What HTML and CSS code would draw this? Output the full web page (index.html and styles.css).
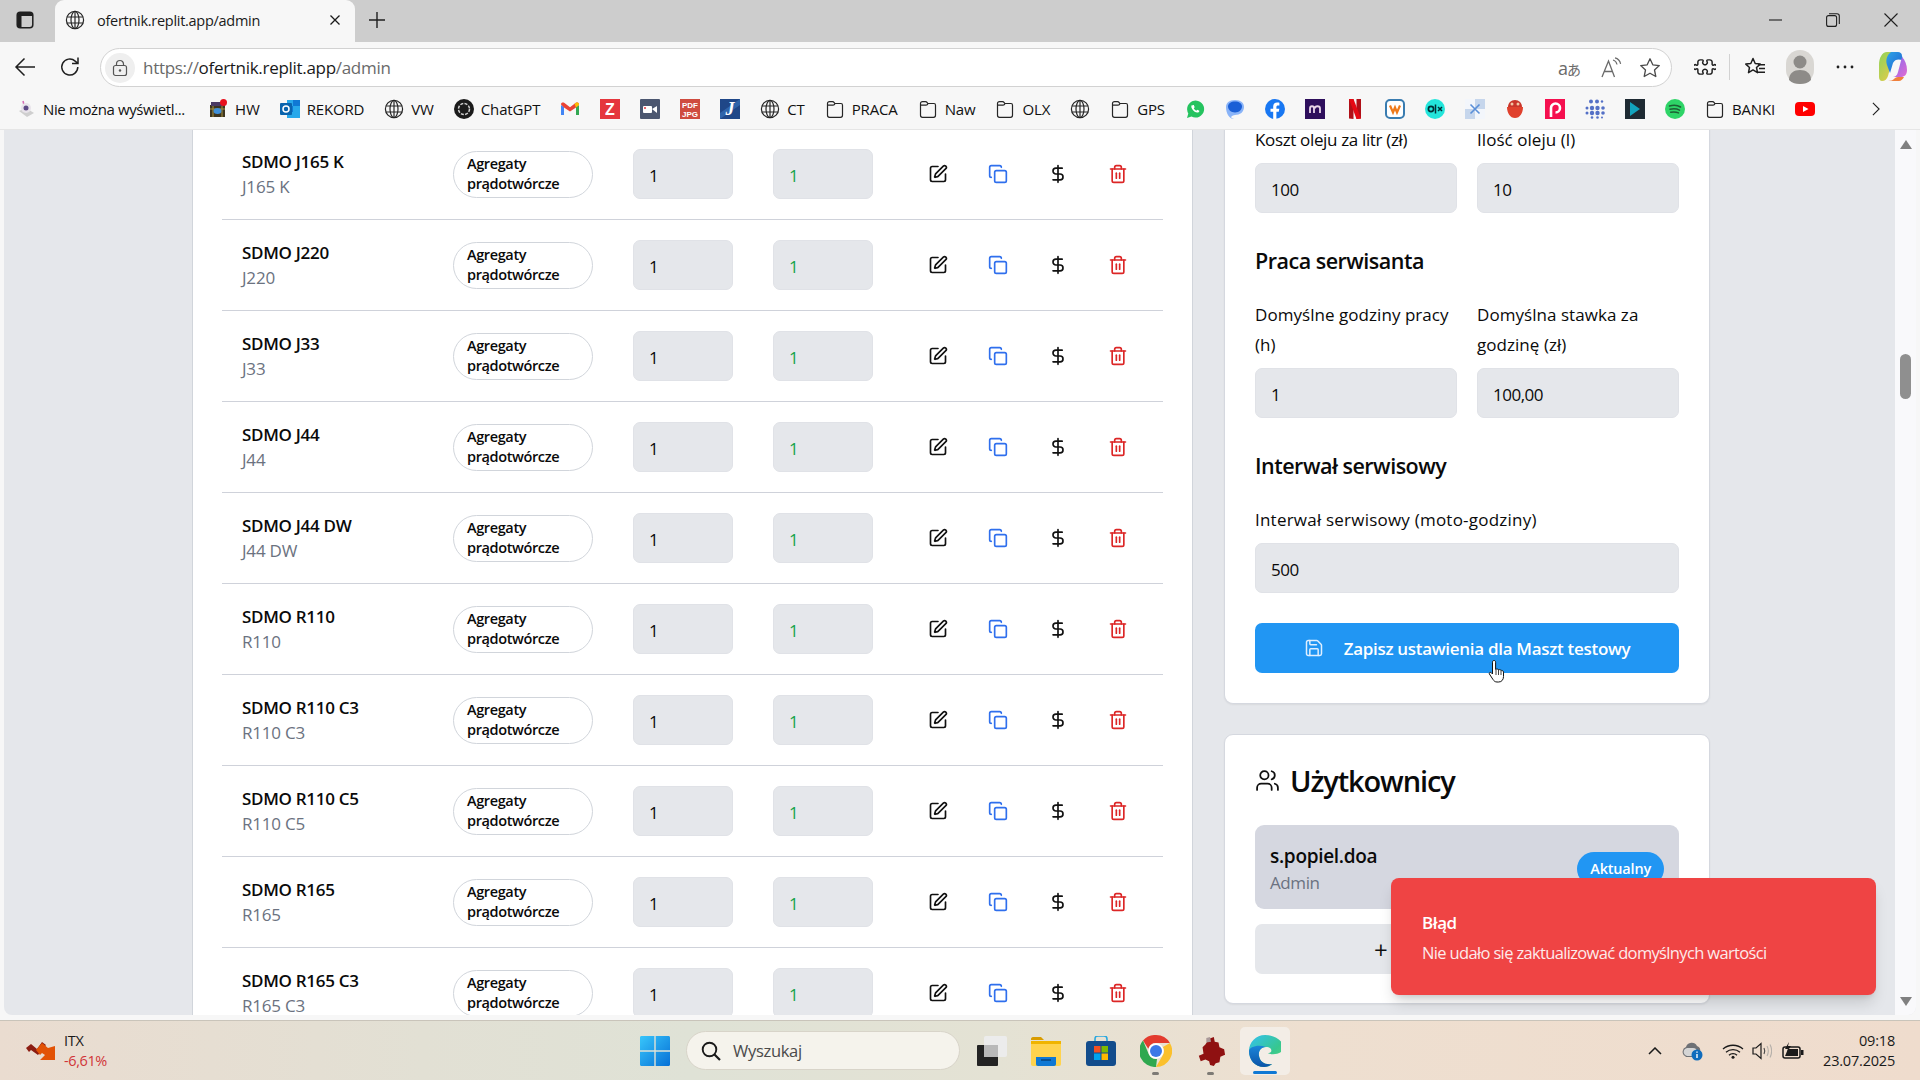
FILE: index.html
```html
<!DOCTYPE html>
<html lang="pl">
<head>
<meta charset="utf-8">
<title>ofertnik.replit.app/admin</title>
<link rel="stylesheet" href="styles.css">
</head>
<body>
<svg class="sprite" aria-hidden="true">
  <symbol id="i-edit" viewBox="0 0 24 24"><path d="M12 3H5a2 2 0 0 0-2 2v14a2 2 0 0 0 2 2h14a2 2 0 0 0 2-2v-7"/><path d="M18.375 2.625a1 1 0 0 1 3 3l-9.013 9.014a2 2 0 0 1-.853.505l-2.873.84a.5.5 0 0 1-.62-.62l.84-2.873a2 2 0 0 1 .506-.852z"/></symbol>
  <symbol id="i-copy" viewBox="0 0 24 24"><rect width="14" height="14" x="8" y="8" rx="2" ry="2"/><path d="M4 16c-1.100 0-2-.9-2-2V4c0-1.100.9-2 2-2h10c1.100 0 2 .9 2 2"/></symbol>
  <symbol id="i-dollar" viewBox="0 0 24 24"><line x1="12" x2="12" y1="2" y2="22"/><path d="M17 5H9.500a3.500 3.500 0 0 0 0 7h5a3.500 3.500 0 0 1 0 7H6"/></symbol>
  <symbol id="i-trash" viewBox="0 0 24 24"><path d="M3 6h18"/><path d="M19 6v14c0 1-1 2-2 2H7c-1 0-2-1-2-2V6"/><path d="M8 6V4c0-1 1-2 2-2h4c1 0 2 1 2 2v2"/><line x1="10" x2="10" y1="11" y2="17"/><line x1="14" x2="14" y1="11" y2="17"/></symbol>
  <symbol id="i-globe" viewBox="0 0 20 20"><circle cx="10" cy="10" r="8.600"/><ellipse cx="10" cy="10" rx="4" ry="8.600"/><path d="M1.800 7h16.400M1.800 13h16.400M10 1.400v17.200"/></symbol>
  <symbol id="i-folder" viewBox="0 0 20 20"><path d="M2.500 4.600c0-1.200.8-2 2-2h3c.8 0 1.200.3 1.700 1l.6.9h6.200c1.200 0 1.500.8 1.500 1.800v10c0 1.200-.8 2-2 2h-11c-1.200 0-2-.8-2-2zM2.500 6.200h5.600c.9 0 1.400-.4 2-1.800"/></symbol>
</svg>

<header class="tabstrip">
  <div class="panel-btn"><svg class="ico18" viewBox="0 0 18 18"><rect x="1.200" y="1.200" width="15.600" height="15.600" rx="3" fill="none" stroke="#1f1f1f" stroke-width="1.500"/><path d="M1.500 4c0-1.500 1-2.500 2.500-2.500h10c1.500 0 2.500 1 2.500 2.500v1h-15zM1.500 5h4v11h-4z" fill="#1f1f1f"/></svg></div>
  <div class="tab">
    <svg class="ico20 line"><use href="#i-globe"/></svg>
    <span class="tab-title">ofertnik.replit.app/admin</span>
    <svg class="tab-close" viewBox="0 0 12 12"><path d="M1.500 1.500l9 9M10.500 1.500l-9 9"/></svg>
  </div>
  <div class="new-tab"><svg class="ico18" viewBox="0 0 18 18"><path d="M9 1v16M1 9h16" stroke="#1f1f1f" stroke-width="1.400" fill="none"/></svg></div>
  <div class="spacer"></div>
  <div class="win-btn"><svg class="ico14" viewBox="0 0 14 14"><path d="M1 7h13" stroke="#1f1f1f" stroke-width="1.100"/></svg></div>
  <div class="win-btn"><svg class="ico14" viewBox="0 0 14 14"><rect x=".6" y="2.600" width="10" height="10.800" rx="2" fill="none" stroke="#1f1f1f" stroke-width="1.100"/><path d="M3 .7h8c1.400 0 2.300.9 2.300 2.300v8" fill="none" stroke="#1f1f1f" stroke-width="1.100"/></svg></div>
  <div class="win-btn"><svg class="ico14" viewBox="0 0 14 14"><path d="M.5.500l13 13M13.500.500l-13 13" stroke="#1f1f1f" stroke-width="1.100"/></svg></div>
</header>

<nav class="toolbar">
  <div class="tool-btn first"><svg class="ico22" viewBox="0 0 22 22"><path d="M21 11H2M10.500 2.500L2 11l8.500 8.500" fill="none" stroke="#1f1f1f" stroke-width="1.500"/></svg></div>
  <div class="tool-btn"><svg class="ico22" viewBox="0 0 22 22"><path d="M18.800 11a8 8 0 1 1-2.600-5.900L19 7.500M19 1.500v6h-6" fill="none" stroke="#1f1f1f" stroke-width="1.500"/></svg></div>
  <div class="address">
    <div class="lock"><svg class="ico18" viewBox="0 0 18 18"><rect x="2.500" y="6.500" width="13" height="10" rx="2" fill="none" stroke="#555" stroke-width="1.200"/><path d="M5.500 6.500V5a3.500 3.500 0 0 1 7 0v1.500" fill="none" stroke="#555" stroke-width="1.200"/><circle cx="9" cy="11.500" r="1.200" fill="#555"/></svg></div>
    <div class="url"><span class="url-dim">https://</span>ofertnik.replit.app<span class="url-dim">/admin</span></div>
    <div class="addr-icons">
      <span class="translate">a<span class="kana">あ</span></span>
      <svg class="ico22" viewBox="0 0 22 22"><path d="M2 20L8.500 4l6 16M4.500 14.500h8" fill="none" stroke="#6a6a6a" stroke-width="1.300"/><path d="M13 3c2 .5 3.500 2 4 4.500M15 .8c3 .7 5 3 5.600 6" fill="none" stroke="#6a6a6a" stroke-width="1.200"/></svg>
      <svg class="ico22" viewBox="0 0 22 22"><path d="M11 1.800l2.800 6 6.500.8-4.800 4.400 1.300 6.500-5.800-3.300-5.800 3.300 1.300-6.500L1.700 8.600l6.500-.8z" fill="none" stroke="#4a4a4a" stroke-width="1.300" stroke-linejoin="round"/></svg>
    </div>
  </div>
  <div class="tool-btn ext"><svg class="ico22" viewBox="0 0 24 24"><path transform="rotate(45 12 12)" d="M15.390 4.390a1 1 0 0 0 1.680-.474 2.500 2.500 0 1 1 3.014 3.015 1 1 0 0 0-.474 1.680l1.683 1.682a2.414 2.414 0 0 1 0 3.414L19.610 15.390a1 1 0 0 1-1.680-.474 2.500 2.500 0 1 0-3.014 3.015 1 1 0 0 1 .474 1.680l-1.683 1.682a2.414 2.414 0 0 1-3.414 0L8.610 19.610a1 1 0 0 0-1.680.474 2.500 2.500 0 1 1-3.014-3.015 1 1 0 0 0 .474-1.680l-1.683-1.682a2.414 2.414 0 0 1 0-3.414L4.390 8.610a1 1 0 0 1 1.680.474 2.500 2.500 0 1 0 3.014-3.015 1 1 0 0 1-.474-1.680l1.683-1.682a2.414 2.414 0 0 1 3.414 0z" fill="none" stroke="#1f1f1f" stroke-width="1.600"/></svg></div>
  <div class="tool-divider"></div>
  <div class="tool-btn"><svg class="ico22" viewBox="0 0 22 22"><path d="M9 2.500l2.200 5 5 .6-3.700 3.400 1 5.200L9 13.900l-4.500 2.800 1-5.200L1.800 8.100l5-.6z" fill="none" stroke="#1f1f1f" stroke-width="1.500" stroke-linejoin="round"/><path d="M14 8.800h7M15 12.500h6M13.500 16.200h7.500" stroke="#1f1f1f" stroke-width="1.400"/></svg></div>
  <div class="tool-btn"><svg class="avatar" viewBox="0 0 28 34"><rect width="28" height="34" rx="14" fill="#d9d7d3"/><circle cx="14" cy="12" r="6.500" fill="#8d8b88"/><path d="M3 30c0-7 5-10 11-10s11 3 11 10c-3 3-7 4-11 4s-8-1-11-4z" fill="#8d8b88"/></svg></div>
  <div class="tool-btn"><svg class="ico22" viewBox="0 0 22 22"><circle cx="4" cy="11" r="1.400" fill="#1f1f1f"/><circle cx="11" cy="11" r="1.400" fill="#1f1f1f"/><circle cx="18" cy="11" r="1.400" fill="#1f1f1f"/></svg></div>
  <div class="tool-btn copilot"><svg class="ico28" viewBox="0 0 28 32">
    <defs>
      <linearGradient id="cpA" x1="0" y1="0" x2="1" y2="1"><stop offset="0" stop-color="#2fa4e7"/><stop offset="1" stop-color="#1e5fd0"/></linearGradient>
      <linearGradient id="cpB" x1="0" y1="0" x2="1" y2="1"><stop offset="0" stop-color="#8fd35a"/><stop offset="1" stop-color="#f6c945"/></linearGradient>
      <linearGradient id="cpC" x1="0" y1="0" x2="1" y2="1"><stop offset="0" stop-color="#7c6cf0"/><stop offset="1" stop-color="#e46ad1"/></linearGradient>
    </defs>
    <path d="M8 1h11c-3 0-4 2-5 5l-5 19c-1 3-3 5-6 5-2 0-3-2-3-4V14C0 7 3 1 8 1z" fill="url(#cpB)"/>
    <path d="M8 1h11c2 0 4 1 4 4l1 4c-5-1-8-1-10 3L11 22 8 14C6 8 9 3 12 1z" fill="url(#cpA)"/>
    <path d="M23 6c3 3 5 8 5 13s-3 7-6 7H13c3 0 5-1 6-5l4-15z" fill="url(#cpC)"/>
    <path d="M9 30h11c2 0 4-2 5-4l-6 0c-2 0-3 1-4 2-1 1-3 2-6 2z" fill="#f0803c"/>
  </svg></div>
</nav>

<div class="bookmarks">
  <div class="bm bm-first"><svg class="bi" viewBox="0 0 20 20"><path d="M3 12l7-3 8 5-7 4z" fill="#cfcfcf"/><path d="M7 2l1 4" stroke="#d66bb5" stroke-width="1.500"/><circle cx="10" cy="9" r="5" fill="#e8e3ea"/><circle cx="10" cy="9" r="2.500" fill="#5e4a86"/></svg><span class="bl bl-long">Nie można wyświetl...</span></div>
  <div class="bm"><svg class="bi" viewBox="0 0 20 20"><rect x="2" y="6" width="15" height="12" fill="#3d3520"/><path d="M2 10h15M5 6v12M14 6v12" stroke="#a8923e"/><ellipse cx="9.500" cy="12" rx="4" ry="3" fill="#3f8fd8"/><path d="M3 3h12v4H3z" fill="#4a3a63"/><circle cx="15.500" cy="3.500" r="3.500" fill="#e8111d"/></svg><span class="bl">HW</span></div>
  <div class="bm"><svg class="bi" viewBox="0 0 20 20"><rect x="7" y="1" width="13" height="18" fill="#28a8ea"/><path d="M13 1h7v6h-7zM7 7h6v6H7z" fill="#0f78d4"/><rect y="4" width="12" height="12" rx="1" fill="#0a64ad"/><circle cx="6" cy="10" r="3" fill="none" stroke="#fff" stroke-width="1.500"/></svg><span class="bl">REKORD</span></div>
  <div class="bm"><svg class="bi line"><use href="#i-globe"/></svg><span class="bl">VW</span></div>
  <div class="bm"><svg class="bi" viewBox="0 0 20 20"><circle cx="10" cy="10" r="10" fill="#1b1b1b"/><circle cx="10" cy="10" r="5.500" fill="none" stroke="#cfcfcf" stroke-width="1.500" stroke-dasharray="3 1.300"/></svg><span class="bl">ChatGPT</span></div>
  <div class="bm"><svg class="bi" viewBox="0 0 20 20"><path d="M1 6v10h3V8z" fill="#4285f4"/><path d="M19 6v10h-3V8z" fill="#34a853"/><path d="M1 5.500C1 3.500 3 3 4.500 4L10 8.200 15.500 4C17 3 19 3.500 19 5.500L16 8.500 10 12.500 4 8.500z" fill="#ea4335"/><path d="M16 8.500L19 6V5.500C19 3.500 17 3 15.500 4L14.500 4.800z" fill="#fbbc04"/></svg></div>
  <div class="bm"><svg class="bi" viewBox="0 0 20 20"><rect width="20" height="20" fill="#e5363d"/><text class="glyph-z" x="10" y="15.500">Z</text></svg></div>
  <div class="bm"><svg class="bi" viewBox="0 0 20 20"><rect width="20" height="20" rx="1" fill="#4c5770"/><rect x="3" y="7" width="9" height="7" rx="1" fill="#fff"/><path d="M12 10l5-3v7z" fill="#fff"/><circle cx="5" cy="9" r="1" fill="#e5363d"/></svg></div>
  <div class="bm"><svg class="bi" viewBox="0 0 20 20"><rect width="20" height="20" fill="#cf4b3f"/><text class="glyph-pdf" x="10" y="9">PDF</text><text class="glyph-pdf" x="10" y="18">JPG</text></svg></div>
  <div class="bm"><svg class="bi" viewBox="0 0 20 20"><path d="M0 0h20v20H0z" fill="#1f4788"/><path d="M20 0v6L0 20V14z" fill="#3a78c2" opacity=".6"/><text class="glyph-g" x="10" y="16">J</text></svg></div>
  <div class="bm"><svg class="bi line"><use href="#i-globe"/></svg><span class="bl">CT</span></div>
  <div class="bm"><svg class="bi line"><use href="#i-folder"/></svg><span class="bl">PRACA</span></div>
  <div class="bm"><svg class="bi line"><use href="#i-folder"/></svg><span class="bl">Naw</span></div>
  <div class="bm"><svg class="bi line"><use href="#i-folder"/></svg><span class="bl">OLX</span></div>
  <div class="bm"><svg class="bi line"><use href="#i-globe"/></svg></div>
  <div class="bm"><svg class="bi line"><use href="#i-folder"/></svg><span class="bl">GPS</span></div>
  <div class="bm"><svg class="bi" viewBox="0 0 20 20"><path d="M2 19l1.300-4.600A8.500 8.500 0 1 1 6.500 17.500z" fill="#25c35f"/><path d="M7 6c-1 1-1 2.500.500 4.500S11 14 13 13.500c1-.3 1.500-1 1.300-1.800l-2-1-1 1c-1-.4-2-1.500-2.500-2.500l.9-1-.9-2.200c-.7-.2-1.300 0-1.800.5z" fill="#fff"/></svg></div>
  <div class="bm"><svg class="bi" viewBox="0 0 20 20"><path d="M1 8c0-4 3-7 9-7s9 3 9 7c0 5-4 8-9 8l-2 .5C5 18 6 19 9 20 4 20 1 14 1 8z" fill="#8ab4f8"/><path d="M3 7.500c0-3 3-5 7-5s7 2 7 5-3 6-7 6-7-3-7-6z" fill="#1a5fd6"/></svg></div>
  <div class="bm"><svg class="bi" viewBox="0 0 20 20"><circle cx="10" cy="10" r="10" fill="#1877f2"/><path d="M13.800 12.800l.5-3h-2.900V8c0-.9.400-1.600 1.700-1.600h1.300V3.800s-1.200-.2-2.300-.2c-2.400 0-3.900 1.400-3.900 4v2.200H5.500v3h2.700V20h3.200v-7.200z" fill="#fff"/></svg></div>
  <div class="bm"><svg class="bi" viewBox="0 0 20 20"><rect width="20" height="20" fill="#2e0f5c"/><path d="M5 14V9.500c0-3 4-3 4 0V14M10 9.500c0-3 5-3 5 0V14" fill="none" stroke="#e8d5e8" stroke-width="1.800"/></svg></div>
  <div class="bm"><svg class="bi" viewBox="0 0 20 20"><path d="M4 0h4.500v20L4 19.500z" fill="#b01018"/><path d="M11.500 0H16v19.500l-4.500.5z" fill="#b01018"/><path d="M4 0h4.500l7.500 19.500-4.500.5z" fill="#e50914"/></svg></div>
  <div class="bm"><svg class="bi" viewBox="0 0 20 20"><rect x="1" y="1" width="18" height="18" rx="4" fill="#fff" stroke="#3a7cb0" stroke-width="2"/><path d="M5 6.500l3 7 2-5 2 5 3-7" fill="none" stroke="#ef7a1a" stroke-width="2.200"/></svg></div>
  <div class="bm"><svg class="bi" viewBox="0 0 20 20"><circle cx="10" cy="10" r="10" fill="#23e5db"/><circle cx="6" cy="10" r="2.600" fill="none" stroke="#002f34" stroke-width="1.700"/><path d="M10.500 5.500v9M13 8l4 4M17 8l-4 4" stroke="#002f34" stroke-width="1.500"/></svg></div>
  <div class="bm"><svg class="bi" viewBox="0 0 20 20"><rect width="20" height="20" fill="#fff"/><path d="M0 0h10v10H0zM10 10h10v10H10z" fill="#f3f6fb"/><path d="M0 10h10v10H0zM10 0h10v10H10z" fill="#c6d6ec"/><path d="M5.500 5.500l9 9M14.500 5.500l-9 9" stroke="#5a8fd8" stroke-width="1.600"/></svg></div>
  <div class="bm"><svg class="bi" viewBox="0 0 20 20"><path d="M2 8h16c0 6-3 11-8 11S2 14 2 8z" fill="#e0412d"/><path d="M3 8c0-4 3-7 7-7s7 3 7 7z" fill="#c9352a"/><circle cx="7" cy="5" r="1.500" fill="#f2c6a5"/><circle cx="13" cy="5" r="1.500" fill="#f2c6a5"/></svg></div>
  <div class="bm"><svg class="bi" viewBox="0 0 20 20"><rect width="20" height="20" fill="#f5104f"/><path d="M6 18V9a4.500 4.500 0 1 1 4.500 4.500" fill="none" stroke="#fff" stroke-width="2.600"/></svg></div>
  <div class="bm"><svg class="bi" viewBox="0 0 20 20"><g fill="#5470c6"><circle cx="6" cy="2.500" r="2"/><circle cx="12" cy="2.500" r="2"/><circle cx="17" cy="2.500" r="1.200"/><circle cx="2" cy="9" r="1.500"/><circle cx="7" cy="9" r="2.200"/><circle cx="12.500" cy="9" r="2.200"/><circle cx="18" cy="9" r="1.800"/><circle cx="2" cy="14" r="1.500"/><circle cx="7" cy="14" r="2.200"/><circle cx="12.500" cy="14" r="2.200"/><circle cx="18" cy="14" r="1.800"/><circle cx="7" cy="18.500" r="1.300"/><circle cx="12.500" cy="18.500" r="1.300"/><circle cx="17" cy="18.500" r="1"/></g></svg></div>
  <div class="bm"><svg class="bi" viewBox="0 0 20 20"><rect width="20" height="20" fill="#1e2a33"/><path d="M5 3l10 7-10 7z" fill="#12a3bd"/></svg></div>
  <div class="bm"><svg class="bi" viewBox="0 0 20 20"><circle cx="10" cy="10" r="10" fill="#2ed467"/><path d="M4.500 7c4-1 8-.8 11 1M5 10.200c3.500-.8 6.800-.6 9.500.9M5.700 13.200c3-.6 5.500-.4 7.800.7" fill="none" stroke="#111" stroke-opacity=".6" stroke-width="1.500" stroke-linecap="round"/></svg></div>
  <div class="bm"><svg class="bi line"><use href="#i-folder"/></svg><span class="bl">BANKI</span></div>
  <div class="bm"><svg class="bi" viewBox="0 0 20 20"><rect y="3" width="20" height="14" rx="4" fill="#f00"/><path d="M8 7l5.500 3L8 13z" fill="#fff"/></svg></div>
  <div class="bm-more"><svg class="ico14" viewBox="0 0 14 18"><path d="M3 1l8 8-8 8" fill="none" stroke="#1f1f1f" stroke-width="1.400"/></svg></div>
</div>

<div class="frame">
  <main class="page">
    <div class="viewport">
      <section class="list-card">
        <div class="row">
          <div class="model"><div class="model-name">SDMO J165 K</div><div class="model-code">J165 K</div></div>
          <div class="pill">Agregaty prądotwórcze</div>
          <input class="field" value="1" readonly>
          <input class="field field-green" value="1" readonly>
          <svg class="act"><use href="#i-edit"/></svg><svg class="act act-blue"><use href="#i-copy"/></svg><svg class="act"><use href="#i-dollar"/></svg><svg class="act act-red"><use href="#i-trash"/></svg>
        </div>
        <div class="row">
          <div class="model"><div class="model-name">SDMO J220</div><div class="model-code">J220</div></div>
          <div class="pill">Agregaty prądotwórcze</div>
          <input class="field" value="1" readonly>
          <input class="field field-green" value="1" readonly>
          <svg class="act"><use href="#i-edit"/></svg><svg class="act act-blue"><use href="#i-copy"/></svg><svg class="act"><use href="#i-dollar"/></svg><svg class="act act-red"><use href="#i-trash"/></svg>
        </div>
        <div class="row">
          <div class="model"><div class="model-name">SDMO J33</div><div class="model-code">J33</div></div>
          <div class="pill">Agregaty prądotwórcze</div>
          <input class="field" value="1" readonly>
          <input class="field field-green" value="1" readonly>
          <svg class="act"><use href="#i-edit"/></svg><svg class="act act-blue"><use href="#i-copy"/></svg><svg class="act"><use href="#i-dollar"/></svg><svg class="act act-red"><use href="#i-trash"/></svg>
        </div>
        <div class="row">
          <div class="model"><div class="model-name">SDMO J44</div><div class="model-code">J44</div></div>
          <div class="pill">Agregaty prądotwórcze</div>
          <input class="field" value="1" readonly>
          <input class="field field-green" value="1" readonly>
          <svg class="act"><use href="#i-edit"/></svg><svg class="act act-blue"><use href="#i-copy"/></svg><svg class="act"><use href="#i-dollar"/></svg><svg class="act act-red"><use href="#i-trash"/></svg>
        </div>
        <div class="row">
          <div class="model"><div class="model-name">SDMO J44 DW</div><div class="model-code">J44 DW</div></div>
          <div class="pill">Agregaty prądotwórcze</div>
          <input class="field" value="1" readonly>
          <input class="field field-green" value="1" readonly>
          <svg class="act"><use href="#i-edit"/></svg><svg class="act act-blue"><use href="#i-copy"/></svg><svg class="act"><use href="#i-dollar"/></svg><svg class="act act-red"><use href="#i-trash"/></svg>
        </div>
        <div class="row">
          <div class="model"><div class="model-name">SDMO R110</div><div class="model-code">R110</div></div>
          <div class="pill">Agregaty prądotwórcze</div>
          <input class="field" value="1" readonly>
          <input class="field field-green" value="1" readonly>
          <svg class="act"><use href="#i-edit"/></svg><svg class="act act-blue"><use href="#i-copy"/></svg><svg class="act"><use href="#i-dollar"/></svg><svg class="act act-red"><use href="#i-trash"/></svg>
        </div>
        <div class="row">
          <div class="model"><div class="model-name">SDMO R110 C3</div><div class="model-code">R110 C3</div></div>
          <div class="pill">Agregaty prądotwórcze</div>
          <input class="field" value="1" readonly>
          <input class="field field-green" value="1" readonly>
          <svg class="act"><use href="#i-edit"/></svg><svg class="act act-blue"><use href="#i-copy"/></svg><svg class="act"><use href="#i-dollar"/></svg><svg class="act act-red"><use href="#i-trash"/></svg>
        </div>
        <div class="row">
          <div class="model"><div class="model-name">SDMO R110 C5</div><div class="model-code">R110 C5</div></div>
          <div class="pill">Agregaty prądotwórcze</div>
          <input class="field" value="1" readonly>
          <input class="field field-green" value="1" readonly>
          <svg class="act"><use href="#i-edit"/></svg><svg class="act act-blue"><use href="#i-copy"/></svg><svg class="act"><use href="#i-dollar"/></svg><svg class="act act-red"><use href="#i-trash"/></svg>
        </div>
        <div class="row">
          <div class="model"><div class="model-name">SDMO R165</div><div class="model-code">R165</div></div>
          <div class="pill">Agregaty prądotwórcze</div>
          <input class="field" value="1" readonly>
          <input class="field field-green" value="1" readonly>
          <svg class="act"><use href="#i-edit"/></svg><svg class="act act-blue"><use href="#i-copy"/></svg><svg class="act"><use href="#i-dollar"/></svg><svg class="act act-red"><use href="#i-trash"/></svg>
        </div>
        <div class="row">
          <div class="model"><div class="model-name">SDMO R165 C3</div><div class="model-code">R165 C3</div></div>
          <div class="pill">Agregaty prądotwórcze</div>
          <input class="field" value="1" readonly>
          <input class="field field-green" value="1" readonly>
          <svg class="act"><use href="#i-edit"/></svg><svg class="act act-blue"><use href="#i-copy"/></svg><svg class="act"><use href="#i-dollar"/></svg><svg class="act act-red"><use href="#i-trash"/></svg>
        </div>
      </section>

      <aside class="side">
        <section class="card settings">
          <div class="two">
            <label class="fld"><span class="lbl lbl-top lbl-tight">Koszt oleju za litr (zł)</span><input class="field wide" value="100" readonly></label>
            <label class="fld"><span class="lbl lbl-top">Ilość oleju (l)</span><input class="field wide" value="10" readonly></label>
          </div>
          <h3 class="sub-h">Praca serwisanta</h3>
          <div class="two">
            <label class="fld"><span class="lbl">Domyślne godziny pracy (h)</span><input class="field wide" value="1" readonly></label>
            <label class="fld"><span class="lbl">Domyślna stawka za godzinę (zł)</span><input class="field wide" value="100,00" readonly></label>
          </div>
          <h3 class="sub-h">Interwał serwisowy</h3>
          <label class="fld"><span class="lbl lbl-wide">Interwał serwisowy (moto-godziny)</span><input class="field wide" value="500" readonly></label>
          <button class="save" type="button"><svg class="save-ico" viewBox="0 0 24 24"><path d="M15.200 3a2 2 0 0 1 1.400.6l3.800 3.800a2 2 0 0 1 .6 1.400V19a2 2 0 0 1-2 2H5a2 2 0 0 1-2-2V5a2 2 0 0 1 2-2z"/><path d="M17 21v-7a1 1 0 0 0-1-1H8a1 1 0 0 0-1 1v7"/><path d="M7 3v4a1 1 0 0 0 1 1h7"/></svg>Zapisz ustawienia dla Maszt testowy</button>
        </section>
        <section class="card users">
          <h2 class="users-h"><svg class="users-ico" viewBox="0 0 24 24"><path d="M16 21v-2a4 4 0 0 0-4-4H6a4 4 0 0 0-4 4v2"/><circle cx="9" cy="7" r="4"/><path d="M22 21v-2a4 4 0 0 0-3-3.870"/><path d="M16 3.130a4 4 0 0 1 0 7.750"/></svg>Użytkownicy</h2>
          <div class="user">
            <div><div class="user-name">s.popiel.doa</div><div class="user-role">Admin</div></div>
            <span class="badge">Aktualny</span>
          </div>
          <button class="add" type="button"><span class="add-plus">+</span></button>
        </section>
      </aside>
    </div>
    <div class="scrollbar">
      <span class="arrow-up"></span>
      <span class="thumb"></span>
      <span class="arrow-down"></span>
    </div>
    <div class="toast"><div class="toast-title">Błąd</div><div class="toast-msg">Nie udało się zaktualizować domyślnych wartości</div></div>
    <svg class="cursor" viewBox="0 0 18 25"><path d="M6 1.500c1 0 1.600.7 1.600 1.700v7.300l1.200-.5c.8-.2 1.300.1 1.500.7.8-.4 1.400-.2 1.700.5.800-.4 1.500-.2 1.800.6.600-.2 1.700 0 1.700 1.300v4.400c0 3-1.700 5.500-4.800 5.500H9c-2 0-3-1-4-2.500L1.400 15c-.6-1 .6-2.200 1.700-1.400L4.500 15V3.200C4.500 2.200 5 1.500 6 1.500z" fill="#fff" stroke="#111" stroke-width="1"/><path d="M8 11v5M10.500 11v5M13 12v4" stroke="#111" stroke-width=".8"/></svg>
  </main>
</div>

<footer class="taskbar">
  <div class="widget">
    <svg class="widget-ico" viewBox="0 0 30 20"><path d="M1 7l5-4 6 5 5-7 4 3-8 10-7-5-2 2z" fill="#8c1d12"/><path d="M11 9l6-7 6 5 7-2v14H15l5-5-3-2-2 2z" fill="#e25205"/></svg>
    <div class="widget-text"><div class="w-name">ITX</div><div class="w-val">-6,61%</div></div>
  </div>
  <div class="start"><svg class="start-ico" viewBox="0 0 30 30"><defs><linearGradient id="winG" x1="0" y1="0" x2="1" y2="1"><stop offset="0" stop-color="#38c6fb"/><stop offset="1" stop-color="#0670d6"/></linearGradient></defs><path d="M0 1.500C0 .6.600 0 1.500 0h12.800v14.300H0zM15.700 0h12.800c.9 0 1.500.6 1.500 1.500v12.800H15.700zM0 15.700h14.300V30H1.500C.6 30 0 29.400 0 28.500zM15.700 15.700H30v12.800c0 .9-.6 1.500-1.500 1.500H15.700z" fill="url(#winG)"/></svg></div>
  <div class="search">
    <svg class="search-ico" viewBox="0 0 20 20"><circle cx="8.500" cy="8.500" r="6.800" fill="none" stroke="#1a1a1a" stroke-width="1.900"/><path d="M13.500 13.500l5.500 5.500" stroke="#1a1a1a" stroke-width="2.200"/></svg>
    <span class="search-text">Wyszukaj</span>
  </div>
  <div class="task task-view"><svg class="task-ico" viewBox="0 0 30 30"><rect x="0" y="9" width="21" height="21" rx="1" fill="#232323"/><rect x="7" y="0" width="23" height="21" rx="2" fill="#ececec"/><rect x="7" y="9" width="14" height="12" fill="#b9b9b9"/></svg></div>
  <div class="task"><svg class="task-ico" viewBox="0 0 30 30"><path d="M0 3c0-1 .6-2 2-2h8l3 3h-13z" fill="#d99c00"/><path d="M0 5h30v23c0 1-.6 2-2 2H2c-1.400 0-2-1-2-2z" fill="#ffd34e"/><path d="M0 5h30v3H0z" fill="#f0b400"/><path d="M5 21h20v7c0 1-.6 2-2 2H7c-1.400 0-2-1-2-2z" fill="#0f78d4"/><path d="M10 24h10" stroke="#073f78" stroke-width="1.400"/></svg></div>
  <div class="task"><svg class="task-ico" viewBox="0 0 30 30"><path d="M9 6V3c0-2 1-3 3-3h6c2 0 3 1 3 3v3" fill="none" stroke="#29a8e0" stroke-width="1.600"/><rect y="5" width="30" height="25" rx="3" fill="#124c8c"/><rect x="8" y="10" width="6.500" height="6.500" fill="#f25022"/><rect x="15.500" y="10" width="6.500" height="6.500" fill="#7fba00"/><rect x="8" y="17.500" width="6.500" height="6.500" fill="#00a4ef"/><rect x="15.500" y="17.500" width="6.500" height="6.500" fill="#ffb900"/></svg></div>
  <div class="task running"><svg class="task-ico chrome" viewBox="0 0 32 32"><path d="M16 0a16 16 0 0 1 13.900 8H16a8 8 0 0 0-7.700 5.800L3 5.600A16 16 0 0 1 16 0z" fill="#e33b2e"/><path d="M29.900 8A16 16 0 0 1 16 32l6.900-12A8 8 0 0 0 22.900 12z" fill="#fbc02d"/><path d="M16 32A16 16 0 0 1 3 5.600L9.100 20a8 8 0 0 0 7.900 4z" fill="#2fa84f"/><circle cx="16" cy="16" r="7.700" fill="#fff"/><circle cx="16" cy="16" r="6" fill="#3b78e7"/></svg></div>
  <div class="task running"><svg class="task-ico" viewBox="0 0 30 32"><path d="M13 3l5-2 1 5 4 1 1 5 5 2 1 6-5 2-1 6-4 1-2 3-4-1-1-4-4-2-5 2-2-6 5-2-1-7 3-3z" fill="#8f1111"/><path d="M10 2l4-1 1 5-5 1z" fill="#a99"/></svg></div>
  <div class="task active"><svg class="task-ico edge" viewBox="0 0 32 32"><defs><linearGradient id="edgeA" x1="0" y1="0" x2="1" y2="1"><stop offset="0" stop-color="#35c1f1"/><stop offset=".6" stop-color="#37c78f"/><stop offset="1" stop-color="#5fdc7a"/></linearGradient><linearGradient id="edgeB" x1="0" y1="0" x2="0" y2="1"><stop offset="0" stop-color="#1b86d9"/><stop offset="1" stop-color="#0b53a8"/></linearGradient></defs><path d="M16 0C7 0 0 7 0 16c0 9 6 16 15 16 3 0 6-1 8-3-7 1-12-2-13-8-1-6 3-9 7-9 5 0 6 3 5 5-1 1-3 1-3 1 2 2 12 2 15-3 1-2 1-4 0-6C31 4 24 0 16 0z" fill="url(#edgeA)"/><path d="M0 16c0 9 6 16 15 16 3 0 6-1 8-3-7 1-12-2-13-8-1-6 3-9 7-9-8-3-17 0-17 4z" fill="url(#edgeB)"/></svg></div>
  <div class="tray">
    <svg class="tray-caret" viewBox="0 0 14 8"><path d="M1 7l6-6 6 6" fill="none" stroke="#1a1a1a" stroke-width="1.500"/></svg>
    <svg class="tray-cloud" viewBox="0 0 22 20"><path d="M3 15a5 5 0 0 1 1-9 6 6 0 0 1 11-1 5 5 0 0 1 3 6v5H4z" fill="#6f7175"/><path d="M3 14a4 4 0 0 1 2-7h6a4 4 0 0 1 0 8H5z" fill="#d5d5d5"/><circle cx="15" cy="14" r="5.500" fill="#0f6cbd"/><path d="M15 13v4M15 10.500v1.300" stroke="#fff" stroke-width="1.400"/></svg>
    <svg class="tray-wifi" viewBox="0 0 22 16"><path d="M1 6c5.500-5 14.500-5 20 0M4 9.200c4-3.500 10-3.500 14 0M7 12.200c2.200-2 5.800-2 8 0" fill="none" stroke="#1a1a1a" stroke-width="1.300"/><circle cx="11" cy="14.300" r="1.500" fill="#1a1a1a"/></svg>
    <svg class="tray-vol" viewBox="0 0 20 18"><path d="M1 6h3l5-4.500v15L4 12H1z" fill="none" stroke="#1a1a1a" stroke-width="1.200"/><path d="M12 6c1 2 1 4 0 6" fill="none" stroke="#444" stroke-width="1.100"/><path d="M15 4c1.600 3 1.600 7 0 10M18 2.500c2 4 2 9 0 13" fill="none" stroke="#b5b0aa" stroke-width="1.100"/></svg>
    <svg class="tray-batt" viewBox="0 0 22 18"><path d="M7 0L3 7h3l-1 3 4-6H6z" fill="#1a1a1a"/><rect x="1" y="5" width="17" height="11" rx="2" fill="none" stroke="#1a1a1a" stroke-width="1.500"/><path d="M3 14l3-7h10v7z" fill="#1a1a1a"/><rect x="19" y="8" width="2.500" height="5" fill="#1a1a1a"/></svg>
    <div class="clock"><div>09:18</div><div>23.07.2025</div></div>
  </div>
</footer>
</body>
</html>
```
FILE: styles.css
```css
* { box-sizing: border-box; }
html, body { margin: 0; height: 100%; }
body {
  width: 1920px;
  height: 1080px;
  overflow: hidden;
  display: flex;
  flex-direction: column;
  font-family: "Open Sans", "Noto Sans", "Liberation Sans", sans-serif;
  color: #0a0a0a;
  background: #f7f7f7;
}
.sprite { display: none; }
svg { display: block; flex: none; }
.ico14 { width: 14px; height: 14px; }
.ico18 { width: 18px; height: 18px; }
.ico20 { width: 20px; height: 20px; }
.ico22 { width: 22px; height: 22px; }
.ico28 { width: 28px; height: 32px; }
.line { fill: none; stroke: #262626; stroke-width: 1.200; }

/* tab strip */
.tabstrip { display: flex; align-items: center; height: 42px; background: #cdcdcd; flex: none; }
.panel-btn { width: 50px; display: flex; justify-content: center; padding-bottom: 2px; }
.tab {
  margin-left: 5px;
  width: 300px;
  height: 42px;
  display: flex;
  align-items: center;
  padding: 0 14px 2px 10px;
  background: #f7f7f7;
  border-radius: 9px 9px 0 0;
}
.tab-title { margin-left: 12px; font-size: 14.500px; letter-spacing: -.28px; color: #1a1a1a; flex: 1; }
.tab-close { width: 12px; height: 12px; fill: none; stroke: #1a1a1a; stroke-width: 1.300; }
.new-tab { width: 44px; display: flex; justify-content: center; padding-bottom: 2px; }
.spacer { flex: 1; }
.win-btn { width: 58px; display: flex; justify-content: center; padding-bottom: 2px; }

/* toolbar */
.toolbar { display: flex; align-items: center; height: 46px; padding-top: 4px; background: #f7f7f7; flex: none; }
.tool-btn { width: 45px; display: flex; justify-content: center; align-items: center; flex: none; }
.tool-btn.first { margin-left: 2px; }
.address {
  align-self: flex-start;
  margin: 2px 0 0 8px;
  width: 1572px;
  height: 39px;
  border: 1px solid #d2d2d2;
  border-radius: 20px;
  background: #fff;
  display: flex;
  align-items: center;
  padding-left: 4px;
}
.lock { width: 30px; height: 30px; border-radius: 50%; background: #efefef; display: flex; align-items: center; justify-content: center; }
.url { margin-left: 8px; font-size: 17px; letter-spacing: -.3px; color: #1a1a1a; flex: 1; }
.url-dim { color: #6a6a6a; }
.addr-icons { display: flex; align-items: center; gap: 17px; padding-right: 10px; }
.translate { font-size: 18px; color: #6a6a6a; letter-spacing: -1px; width: 24px; margin-right: 1px; }
.kana { font-size: 14px; font-family: "Noto Sans CJK JP", sans-serif; }
.tool-btn.ext { margin-left: 10px; }
.tool-divider { width: 1px; height: 26px; background: #d2d2d2; margin: 0 2px; }
.tool-btn.copilot { margin-left: 3px; }
.avatar { width: 28px; height: 34px; }

/* bookmarks */
.bookmarks { display: flex; align-items: center; height: 42px; background: #f7f7f7; border-bottom: 1px solid #e6e6e6; flex: none; padding-left: 6px; }
.bm { display: flex; align-items: center; gap: 7px; padding: 0 10px; flex: none; }
.bi { width: 20px; height: 20px; }
.bl { font-size: 15px; letter-spacing: -.15px; color: #111; white-space: nowrap; }
.bl-long { width: 151px; letter-spacing: -.38px; }
.bm-first { padding-right: 4px; }
.bm-more { margin-left: auto; margin-right: 37px; }
.glyph-z { font: 700 16px "Liberation Sans", sans-serif; fill: #fff; text-anchor: middle; }
.glyph-pdf { font: 700 8px "Liberation Sans", sans-serif; fill: #fff; text-anchor: middle; }
.glyph-g { font: italic 700 18px "Liberation Serif", serif; fill: #fff; text-anchor: middle; }

/* page frame */
.frame { height: 890px; flex: none; padding: 0 4px 5px; background: #f7f7f7; }
.page {
  position: relative;
  display: flex;
  height: 885px;
  background: #e5e7eb;
  border-radius: 0 0 8px 8px;
  overflow: hidden;
}
.viewport { flex: 1; min-width: 0; height: 885px; overflow: hidden; display: flex; align-items: flex-start; gap: 31px; padding-left: 188px; }

/* list */
.list-card {
  width: 1001px;
  flex: none;
  margin-top: -10px;
  padding: 9px 29px 0;
  background: #fff;
  border: 1px solid #d1d5db;
  border-width: 0 1px;
}
.row {
  display: grid;
  grid-template-columns: 211px 180px 140px 135px 60px 60px 60px 60px;
  align-items: center;
  height: 91px;
  padding-left: 20px;
  border-bottom: 1px solid #cfd2da;
}
.model-name { font-size: 17px; font-weight: 600; line-height: 24px; letter-spacing: -.3px; padding-top: 1px; }
.model-code { font-size: 17px; line-height: 25px; color: #6b7280; letter-spacing: -.2px; }
.pill {
  width: 140px;
  height: 47px;
  padding: 2px 12px 0 13px;
  border: 1px solid #d1d5db;
  border-radius: 24px;
  font-size: 14.500px;
  font-weight: 600;
  line-height: 20px;
  letter-spacing: -.38px;
}
.field {
  display: block;
  width: 100px;
  height: 50px;
  padding: 2px 15px 0;
  font: 400 17px "Open Sans", "Noto Sans", sans-serif;
  letter-spacing: -.5px;
  color: #0a0a0a;
  background: #e5e7eb;
  border: 1px solid #e0e2e7;
  border-radius: 7px;
  outline: none;
}
.field-green { color: #16a34a; }
.wide { width: 100%; }
.act { justify-self: center; width: 20px; height: 20px; fill: none; stroke: #111; stroke-width: 2; stroke-linecap: round; stroke-linejoin: round; }
.act-blue { stroke: #2f6fed; }
.act-red { stroke: #dc2626; }

/* side */
.side { width: 486px; flex: none; display: flex; flex-direction: column; gap: 30px; margin-top: -9px; }
.card {
  background: #fff;
  border: 1px solid #d5d8df;
  border-radius: 9px;
  padding: 30px;
  box-shadow: 0 1px 2px rgba(0,0,0,.06);
}
.settings { padding-top: 9px; border-radius: 0 0 9px 9px; border-top: 0; }
.two { display: grid; grid-template-columns: 202px 202px; gap: 20px; align-items: end; }
.fld { display: flex; flex-direction: column; gap: 8px; }
.lbl { font-size: 17px; font-weight: 500; line-height: 30px; letter-spacing: .05px; }
.lbl-top { line-height: 20px; margin-bottom: 5px; }
.lbl-tight { letter-spacing: -.35px; white-space: nowrap; }
.lbl-wide { letter-spacing: .22px; }
.sub-h { margin: 34px 0 25px; font-size: 21.500px; font-weight: 600; line-height: 28px; letter-spacing: -.5px; }
.save {
  width: 100%;
  height: 50px;
  margin-top: 30px;
  display: flex;
  align-items: center;
  justify-content: center;
  gap: 20px;
  font: 600 17px "Open Sans", "Noto Sans", sans-serif;
  letter-spacing: -.3px;
  color: #fff;
  background: #2196f3;
  border: 0;
  border-radius: 7px;
}
.save-ico { width: 20px; height: 20px; fill: none; stroke: #dfefff; stroke-width: 1.800; stroke-linecap: round; stroke-linejoin: round; }
.users { height: 270px; padding-top: 27px; }
.users-h { display: flex; align-items: center; gap: 10px; margin: 0; height: 36px; font-size: 29px; font-weight: 600; letter-spacing: -1.100px; }
.users-ico { width: 25px; height: 25px; fill: none; stroke: #111; stroke-width: 1.700; stroke-linecap: round; stroke-linejoin: round; }
.user {
  display: flex;
  align-items: center;
  justify-content: space-between;
  height: 84px;
  margin-top: 27px;
  padding: 0 15px;
  background: #d5d7e0;
  border-radius: 9px;
}
.user-name { font-size: 19px; font-weight: 600; line-height: 28px; letter-spacing: -.3px; padding-top: 3px; }
.user-role { font-size: 17px; line-height: 26px; color: #6b7280; letter-spacing: -.4px; }
.badge { padding: 0 13px; height: 34px; line-height: 34px; border-radius: 17px; background: #2196f3; color: #fff; font-size: 14.500px; font-weight: 600; letter-spacing: -.2px; align-self: flex-start; margin-top: 27px; }
.add { display: flex; justify-content: flex-start; align-items: center; width: 100%; height: 50px; margin-top: 15px; padding-left: 119px; background: #e5e7eb; border: 0; border-radius: 7px; }
.add-plus { font: 400 24px "Open Sans", sans-serif; color: #111; }

/* scrollbar */
.scrollbar { position: relative; width: 21px; flex: none; background: #f9f9fb; }
.thumb { position: absolute; left: 5px; top: 224px; width: 11px; height: 45px; border-radius: 6px; background: #8f8f8f; }
.arrow-up, .arrow-down { position: absolute; left: 5px; border: 6px solid transparent; border-left-width: 6px; border-right-width: 6px; }
.arrow-up { top: 10px; border-top: 0; border-bottom: 9px solid #808080; }
.arrow-down { top: 867px; border-bottom: 0; border-top: 9px solid #808080; }

/* toast */
.toast {
  position: absolute;
  left: 1387px;
  top: 748px;
  width: 485px;
  height: 117px;
  padding: 30px 31px;
  background: #ef4444;
  border-radius: 8px;
  color: #fff;
  box-shadow: 0 10px 15px -3px rgba(0,0,0,.15), 0 4px 6px -4px rgba(0,0,0,.15);
}
.toast-title { font-size: 17px; font-weight: 600; line-height: 30px; letter-spacing: -.4px; }
.toast-msg { font-size: 16.500px; line-height: 30px; letter-spacing: -.65px; color: #fdeaea; }
.cursor { position: absolute; left: 1484px; top: 529px; width: 18px; height: 25px; }

/* taskbar */
.taskbar {
  height: 60px;
  flex: none;
  display: flex;
  align-items: center;
  border-top: 1px solid #c9c4ba;
  background: linear-gradient(90deg, #eadcd0 0%, #e2e0d4 22%, #dfe2d6 36%, #e4e2d4 52%, #eedfd0 68%, #efdccd 100%);
}
.widget { width: 630px; display: flex; align-items: center; padding-left: 25px; gap: 9px; flex: none; }
.widget-ico { width: 30px; height: 20px; }
.w-name { font-size: 14.500px; line-height: 20px; letter-spacing: -.3px; color: #1a1a1a; }
.w-val { font-size: 14.500px; line-height: 20px; letter-spacing: -.4px; color: #d13438; }
.start { width: 50px; display: flex; justify-content: center; flex: none; margin-right: 6px; }
.start-ico { width: 30px; height: 30px; }
.search {
  width: 274px;
  height: 39px;
  display: flex;
  align-items: center;
  padding-left: 14px;
  gap: 12px;
  background: #f5f3ec;
  border: 1px solid #d8d4c9;
  border-radius: 20px;
  margin-right: 3px;
  flex: none;
}
.search-ico { width: 20px; height: 20px; }
.search-text { font-size: 16.500px; letter-spacing: -.3px; color: #4a4a4a; }
.task { position: relative; width: 55px; height: 48px; display: flex; align-items: center; justify-content: center; flex: none; }
.task-view { padding-left: 2px; }
.task-ico { width: 30px; height: 30px; }
.chrome, .edge { width: 32px; height: 32px; }
.running::after { content: ""; position: absolute; left: 24px; bottom: 0; width: 7px; height: 3px; border-radius: 2px; background: #7d7a75; }
.active { width: 50px; margin: 0 2px; background: #f3ede6; border-radius: 5px; }
.active::after { content: ""; position: absolute; left: 13px; bottom: 1px; width: 24px; height: 3px; border-radius: 2px; background: #0f78d4; }
.tray { margin-left: auto; display: flex; align-items: center; padding-right: 25px; }
.tray-caret { width: 14px; height: 8px; }
.tray-cloud { width: 22px; height: 20px; margin-left: 20px; }
.tray-wifi { width: 22px; height: 16px; margin-left: 18px; }
.tray-vol { width: 20px; height: 18px; margin-left: 8px; }
.tray-batt { width: 22px; height: 18px; margin-left: 10px; }
.clock { margin-left: 19px; text-align: right; font-size: 14.500px; line-height: 20px; color: #1a1a1a; letter-spacing: -.2px; }
```
